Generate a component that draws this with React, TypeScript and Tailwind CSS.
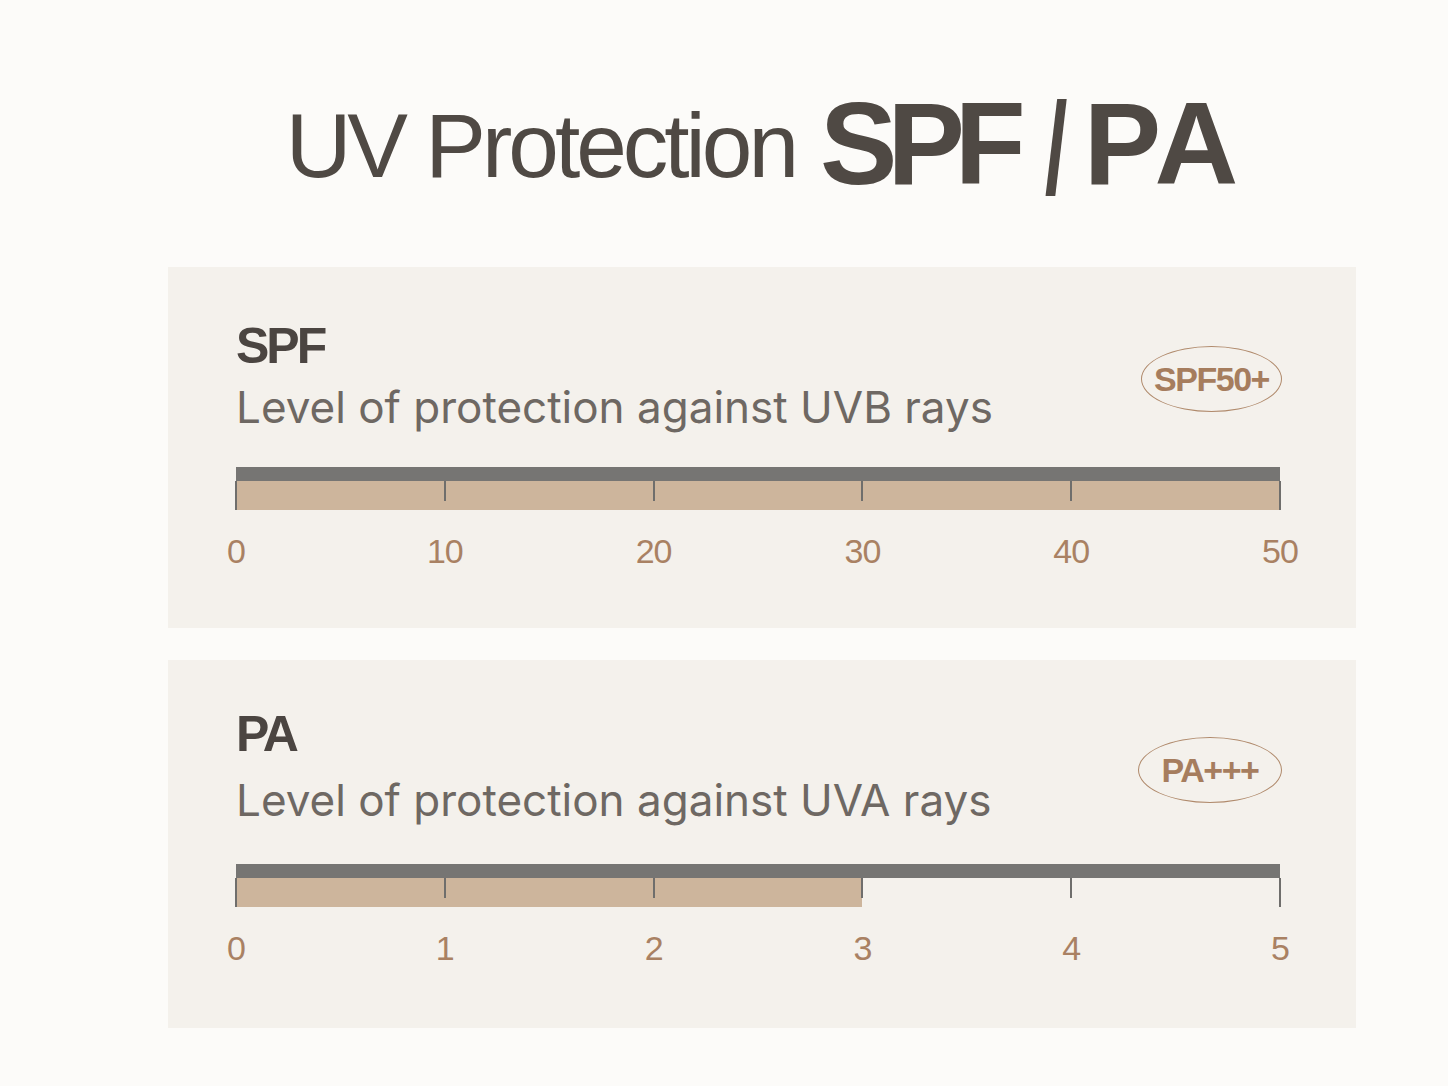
import React from "react";

type ScaleProps = {
  labels: string[];
  fill: number; // 0..1
};

function Scale({ labels, fill }: ScaleProps) {
  return (
    <div className="flex flex-col">
      <div className="relative h-[43px] w-full">
        <div className="h-[14px] w-full bg-[#767573]" />
        <div className="flex h-[29px] w-full">
          <div className="h-full bg-[#cdb59c]" style={{ width: `${fill * 100}%` }} />
        </div>
        <div className="absolute inset-x-0 top-[14px] bottom-0 flex justify-between">
          {labels.map((l, i) => {
            const edge = i === 0 || i === labels.length - 1;
            return (
              <div key={l} className="flex w-0 justify-center">
                <div className={`w-[2px] shrink-0 bg-[#6f6e6c] ${edge ? "h-[29px]" : "h-[20px]"}`} />
              </div>
            );
          })}
        </div>
      </div>
      <div className="mt-[24px] flex justify-between">
        {labels.map((l) => (
          <div key={l} className="flex w-0 justify-center">
            <span className="whitespace-nowrap font-['Liberation_Sans',Arial,sans-serif] text-[34px] leading-none tracking-[-1px] text-[#a98163]">
              {l}
            </span>
          </div>
        ))}
      </div>
    </div>
  );
}

type CardProps = {
  title: string;
  subtitle: string;
  badge: string;
  badgeW: string;
  labels: string[];
  fill: number;
  pt: string;
  gap: string;
  barMt: string;
  pb: string;
};

function Card({ title, subtitle, badge, labels, fill, pt, gap, barMt, pb, badgeW }: CardProps) {
  return (
    <div className={`bg-[#f4f1ec] pl-[68px] pr-[76px] ${pt} ${pb}`}>
      <div className="flex items-center justify-between">
        <div className="flex flex-col">
          <h2 className="font-['Liberation_Sans',Arial,sans-serif] text-[50px] font-bold leading-none tracking-[-3px] text-[#4b4541]">
            {title}
          </h2>
          <p className={`${gap} font-['Inter',sans-serif] text-[44px] leading-none tracking-[0px] text-[#6e6863]`}>
            {subtitle}
          </p>
        </div>
        <div
          className={`flex h-[66px] ${badgeW} mr-[-2px] mt-[8px] items-center justify-center rounded-[50%] border-[1.5px] border-[#b08a6c]`}
        >
          <span className="font-['Liberation_Sans',Arial,sans-serif] text-[34px] font-bold leading-none tracking-[-1.5px] text-[#a67d5e]">
            {badge}
          </span>
        </div>
      </div>
      <div className={barMt}>
        <Scale labels={labels} fill={fill} />
      </div>
    </div>
  );
}

export default function App() {
  return (
    <div className="min-h-[1086px] w-full bg-[#fcfbf9]">
      <div className="ml-[168px] w-[1188px] pt-[86px]">
        <h1 className="flex items-start justify-center font-['Liberation_Sans',Arial,sans-serif] leading-none text-[#4f4944]">
          <span className="mt-[14px] text-[91px] tracking-[-4px]">UV Protection</span>
          <span className="ml-[25px] text-[116px] font-bold tracking-[-10px]">SPF</span>
          <span className="ml-[22px] mt-[-3px] inline-block scale-x-[0.63] text-[130px] font-bold">/</span>
          <span className="ml-[10px] mr-[-2px] text-[116px] font-bold tracking-[2px]">PA</span>
        </h1>
        <div className="mt-[54px] flex flex-col gap-[32px]">
          <Card
            title="SPF"
            subtitle="Level of protection against UVB rays"
            badge="SPF50+"
            badgeW="w-[141px]"
            labels={["0", "10", "20", "30", "40", "50"]}
            fill={1}
            pt="pt-[54px]"
            gap="mt-[14px]"
            barMt="mt-[38px]"
            pb="pb-[60px]"
          />
          <Card
            title="PA"
            subtitle="Level of protection against UVA rays"
            badge="PA+++"
            badgeW="w-[144px]"
            labels={["0", "1", "2", "3", "4", "5"]}
            fill={0.6}
            pt="pt-[49px]"
            gap="mt-[19px]"
            barMt="mt-[42px]"
            pb="pb-[63px]"
          />
        </div>
      </div>
    </div>
  );
}
